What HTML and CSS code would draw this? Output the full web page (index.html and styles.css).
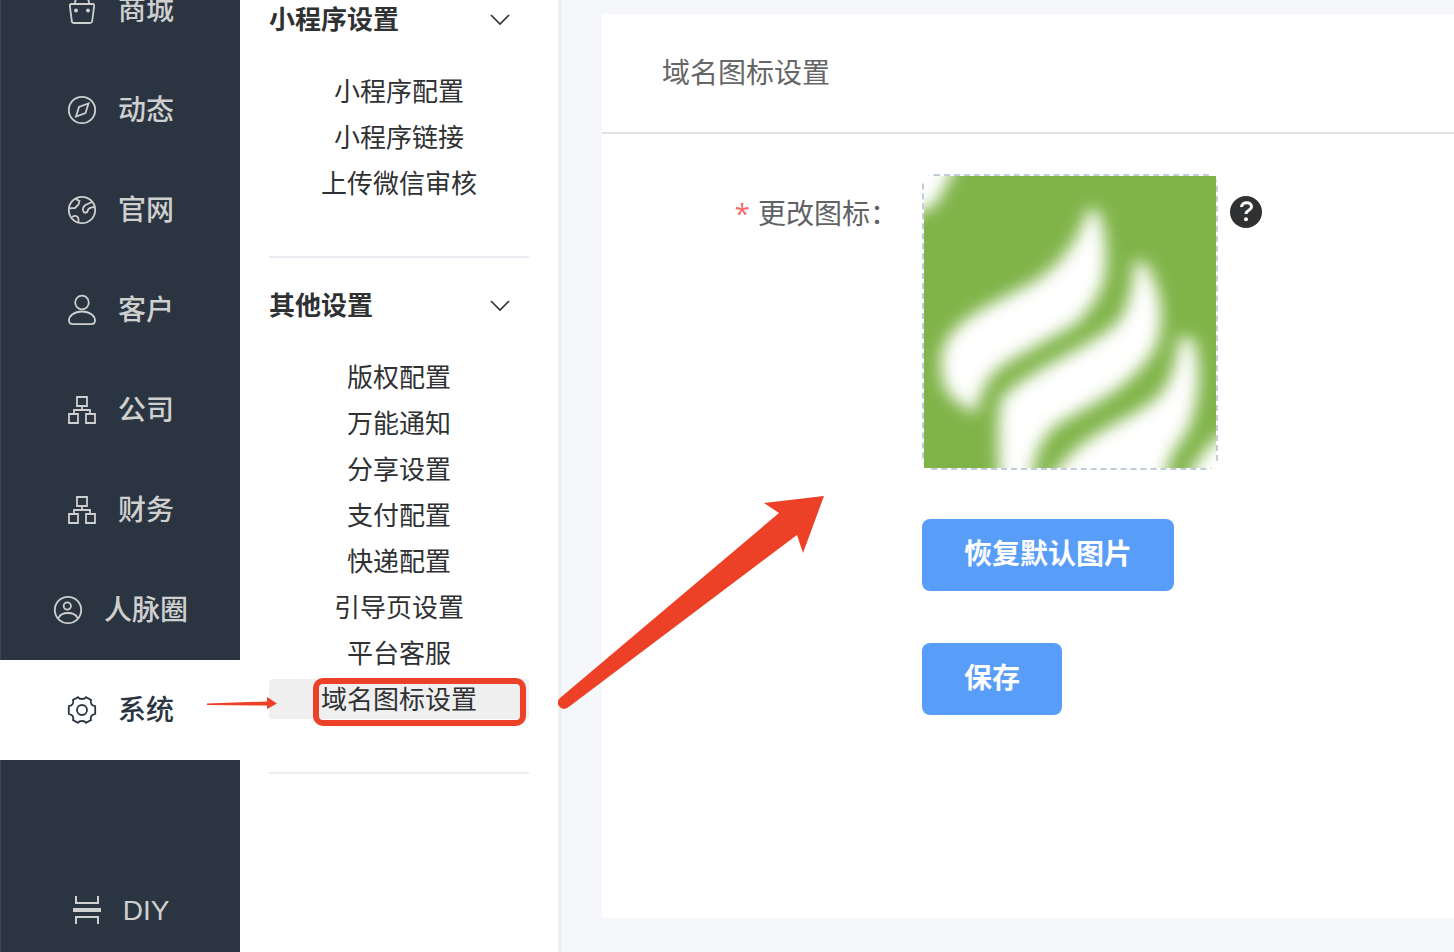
FILE: index.html
```html
<!DOCTYPE html>
<html lang="zh-CN">
<head>
    <meta charset="UTF-8">
    <meta name="viewport" content="width=device-width, initial-scale=1.0">
    <title>域名图标设置</title>
    <link rel="stylesheet" href="styles.css">
</head>
<body>
    <div class="layout">
        <nav class="sidebar">
            <a href="#" class="nav-item">
                <svg class="nav-icon" viewBox="0 0 28 28"><path d="M1.800 9.500q0-1.500 1.500-1.500h21.400q1.500 0 1.500 1.500l-2 15.500q-.3 2-2.300 2H6.100q-2 0-2.300-2zM7 7c0-9 14-9 14 0"/><circle class="dot" cx="8" cy="14.500" r="2"/><circle class="dot" cx="20" cy="14.500" r="2"/></svg>
                <span>商城</span>
            </a>
            <a href="#" class="nav-item">
                <svg class="nav-icon" viewBox="0 0 28 28"><circle cx="14" cy="14" r="13.200"/><path d="M20.500 7.500l-3 9.500-9.500 3.500 3-9.500z"/></svg>
                <span>动态</span>
            </a>
            <a href="#" class="nav-item">
                <svg class="nav-icon" viewBox="0 0 28 28"><circle cx="14" cy="14" r="13.200"/><path d="M7.500 3l4 2-1 3.500-3.500 3.500-6 .3M24 6l-6.500 3q-3 2-2.500 5.500c1 3.500 4.500 2.500 5-.5q.5-2.500 7-3M4 21q4-2.500 6 .5.800 1.500.5 5"/></svg>
                <span>官网</span>
            </a>
            <a href="#" class="nav-item">
                <svg class="nav-icon tall" viewBox="0 0 28 30"><circle cx="14" cy="7.500" r="6.800"/><path d="M14 16.500c8 0 13 4.500 13 9 0 2.500-1.500 3.600-4 3.600H5c-2.500 0-4-1.100-4-3.600 0-4.500 5-9 13-9z"/></svg>
                <span>客户</span>
            </a>
            <a href="#" class="nav-item">
                <svg class="nav-icon" viewBox="0 0 28 28"><path d="M9 1h10v9H9zM1 18h9v9H1zM18 18h9v9h-9zM14 10v4M6 18v-4h16v4"/></svg>
                <span>公司</span>
            </a>
            <a href="#" class="nav-item">
                <svg class="nav-icon" viewBox="0 0 28 28"><path d="M9 1h10v9H9zM1 18h9v9H1zM18 18h9v9h-9zM14 10v4M6 18v-4h16v4"/></svg>
                <span>财务</span>
            </a>
            <a href="#" class="nav-item">
                <svg class="nav-icon" viewBox="0 0 28 28"><circle cx="14" cy="14" r="13.200"/><circle cx="13.300" cy="10" r="3.600"/><path d="M4.500 22c1.500-3.500 5-5 9.500-5s8 1.500 9.500 5"/></svg>
                <span>人脉圈</span>
            </a>
            <a href="#" class="nav-item active">
                <svg class="nav-icon" viewBox="0 0 28 28"><circle cx="14" cy="14" r="5"/><path d="M10 1.200c1.600 2.400 6.400 2.400 8 0l5 2.800c-1 3 .5 5.500 4.200 6.200v7.600c-3.700.7-5.200 3.200-4.200 6.200l-5 2.800c-1.600-2.400-6.400-2.400-8 0L5 24c1-3-.5-5.500-4.200-6.200v-7.600C4.500 9.500 6 7 5 4z"/></svg>
                <span>系统</span>
                <svg class="small-arrow" viewBox="0 0 70 14"><path d="M0 7.500L60 5.500 60 1 70 7.500 60 13 60 9.500 0 9z"/></svg>
            </a>
            <a href="#" class="nav-item diy">
                <svg class="nav-icon" viewBox="0 0 28 28"><path d="M3 0v7h22V0M3 28v-7h22v7"/><path class="bar" d="M0 14h28"/></svg>
                <span>DIY</span>
            </a>
        </nav>

        <aside class="submenu">
            <section class="menu-group">
                <h2>小程序设置 <svg class="chevron" viewBox="0 0 20 12"><path d="M1 1l9 9 9-9"/></svg></h2>
                <ul>
                    <li><a href="#">小程序配置</a></li>
                    <li><a href="#">小程序链接</a></li>
                    <li><a href="#">上传微信审核</a></li>
                </ul>
            </section>
            <section class="menu-group">
                <h2>其他设置 <svg class="chevron" viewBox="0 0 20 12"><path d="M1 1l9 9 9-9"/></svg></h2>
                <ul>
                    <li><a href="#">版权配置</a></li>
                    <li><a href="#">万能通知</a></li>
                    <li><a href="#">分享设置</a></li>
                    <li><a href="#">支付配置</a></li>
                    <li><a href="#">快递配置</a></li>
                    <li><a href="#">引导页设置</a></li>
                    <li><a href="#">平台客服</a></li>
                    <li><a href="#" class="current">域名图标设置</a></li>
                </ul>
            </section>
        </aside>

        <main class="content">
            <div class="card">
                <h1>域名图标设置</h1>
                <form class="icon-form">
                    <div class="form-row">
                        <label for="icon-upload"><span class="required">*</span>更改图标：</label>
                        <button type="button" id="icon-upload" class="upload-box">
                            <svg viewBox="0 0 292 292">
                                <defs>
                                    <filter id="soft" x="-10%" y="-10%" width="120%" height="120%">
                                        <feGaussianBlur stdDeviation="8"/>
                                    </filter>
                                </defs>
                                <rect width="292" height="292" fill="#80b449"/>
                                <g fill="#fff" filter="url(#soft)">
                                    <path d="M-20-20H36L20 14 10 30-20 42z"/>
                                    <path d="M164 34C154 64 140 86 110 106L60 132Q24 152 18 176 14 206 28 222L52 238Q56 206 80 188L150 149Q172 130 180 104 186 66 174 34z"/>
                                    <path d="M211 84Q208 128 194 146C164 174 106 192 78 222Q72 240 76 310H108Q108 268 134 248L180 222Q218 198 232 170 246 130 222 88z"/>
                                    <path d="M256 160Q250 208 232 222C204 248 150 256 124 310H240Q242 280 262 258 282 214 270 164z"/>
                                    <path d="M310 250Q272 274 262 310H310z"/>
                                </g>
                            </svg>
                        </button>
                        <svg class="help-icon" viewBox="0 0 32 32"><circle cx="16" cy="16" r="16"/><path d="M11.500 11c.5-6 10-5.500 10-.2 0 3.700-5.500 3.200-5.500 7.200"/><circle class="point" cx="16" cy="23.200" r="2"/></svg>
                    </div>
                    <div class="form-actions">
                        <button type="button" class="btn">恢复默认图片</button>
                        <button type="submit" class="btn">保存</button>
                    </div>
                </form>
            </div>
            <svg class="big-arrow" viewBox="0 0 266 215"><path d="M2 203L221 18 206 8 266 1 245 58 239 40 12 211Q5 217 1 211-2 207 2 203z"/></svg>
        </main>
    </div>
</body>
</html>
```
FILE: styles.css
```css
* {
    box-sizing: border-box;
}
body {
    margin: 0;
    font-family: "Liberation Sans", "Noto Sans CJK SC", sans-serif;
    font-size: 28px;
    color: #606266;
    background-color: #f5f7fb;
}
a {
    color: inherit;
    text-decoration: none;
}
.layout {
    display: flex;
    height: 100vh;
    overflow: hidden;
}

/* left navigation, scrolled a little */
.sidebar {
    flex: 0 0 240px;
    background-color: #2a3541;
    box-shadow: inset 1px 0 #3b4651;
    color: #cfcfcf;
}
.nav-item {
    position: relative;
    display: flex;
    align-items: center;
    justify-content: center;
    gap: 22px;
    height: 100px;
    padding-left: 2px;
    font-weight: 500;
    line-height: 40px;
}
.nav-item span {
    padding-top: 2px;
}
.nav-item:first-child {
    margin-top: -40px;
}
.nav-item.active {
    background-color: #fff;
    color: #2a3541;
}
.nav-item.diy {
    margin-top: 100px;
}
.nav-icon {
    width: 28px;
    height: 28px;
    fill: none;
    stroke: currentColor;
    stroke-width: 1.8;
    overflow: visible;
}
.nav-icon.tall {
    height: 30px;
}
.nav-icon .dot {
    fill: currentColor;
    stroke: none;
}
.nav-icon .bar {
    stroke-width: 4;
}
.diy .nav-icon {
    stroke-width: 2;
}
.small-arrow {
    position: absolute;
    left: 207px;
    top: 36px;
    width: 70px;
    height: 14px;
    fill: #ec4027;
    z-index: 2;
}

/* second level menu */
.submenu {
    flex: 0 0 322px;
    padding: 0 29px;
    border-right: 4px solid #efefef;
    background-color: #fff;
    color: #303133;
    font-size: 26px;
    line-height: 40px;
}
.menu-group {
    padding: 28px 0 53px;
    border-bottom: 2px solid #ebecf2;
}
.menu-group:first-child {
    margin-top: -28px;
}
.menu-group h2 {
    display: flex;
    align-items: center;
    justify-content: space-between;
    margin: 0 0 31px;
    padding-right: 19px;
    font-size: 26px;
    font-weight: 600;
}
.chevron {
    width: 20px;
    height: 12px;
    fill: none;
    stroke: #303133;
    stroke-width: 1.6;
}
.menu-group ul {
    display: flex;
    flex-direction: column;
    gap: 6px;
    margin: 0;
    padding: 0;
    list-style: none;
    text-align: center;
}
.menu-group li a {
    position: relative;
    display: block;
    padding-top: 2px;
    border-radius: 4px;
    line-height: 38px;
}
.menu-group .current {
    background-color: #efefef;
}
.current::after {
    content: "";
    box-sizing: border-box;
    position: absolute;
    top: -1px;
    left: 44px;
    right: 3px;
    height: 48px;
    border: 6px solid #ec4027;
    border-radius: 10px;
}

/* page content */
.content {
    position: relative;
    flex: 1;
    min-width: 0;
    padding: 14px 0 34px 40px;
}
.card {
    height: 100%;
    background-color: #fff;
}
.card h1 {
    margin: 0;
    padding: 40px 60px 38px;
    border-bottom: 2px solid #dfe1e3;
    font-size: 28px;
    font-weight: 400;
    line-height: 40px;
    color: #666;
}
.icon-form {
    padding-top: 40px;
}
.form-row {
    display: flex;
    align-items: flex-start;
}
.form-row label {
    flex: 0 0 320px;
    padding-right: 24px;
    font-family: "Noto Sans CJK SC", sans-serif;
    line-height: 76px;
    text-align: right;
}
.required {
    margin-right: 8px;
    font-family: "Open Sans", sans-serif;
    line-height: 40px;
    color: #f56c6c;
}
.upload-box {
    width: 296px;
    height: 296px;
    padding: 0;
    border: 2px dashed #c0ccda;
    border-radius: 12px;
    background: none;
    cursor: pointer;
}
.upload-box svg {
    display: block;
    width: 100%;
    height: 100%;
}
.help-icon {
    width: 32px;
    height: 32px;
    margin: 22px 0 0 12px;
    fill: #303133;
}
.help-icon path {
    fill: none;
    stroke: #fff;
    stroke-width: 3;
}
.help-icon .point {
    fill: #fff;
}
.form-actions {
    display: flex;
    flex-direction: column;
    align-items: flex-start;
    gap: 52px;
    margin: 49px 0 0 320px;
}
.btn {
    height: 72px;
    padding: 0 42px;
    border: none;
    border-radius: 8px;
    background-color: #589df8;
    color: #fff;
    font-family: inherit;
    font-size: 28px;
    font-weight: 600;
    line-height: 40px;
    cursor: pointer;
}
.big-arrow {
    position: absolute;
    left: -4px;
    top: 495px;
    width: 266px;
    height: 215px;
    fill: #ec4027;
}
```
